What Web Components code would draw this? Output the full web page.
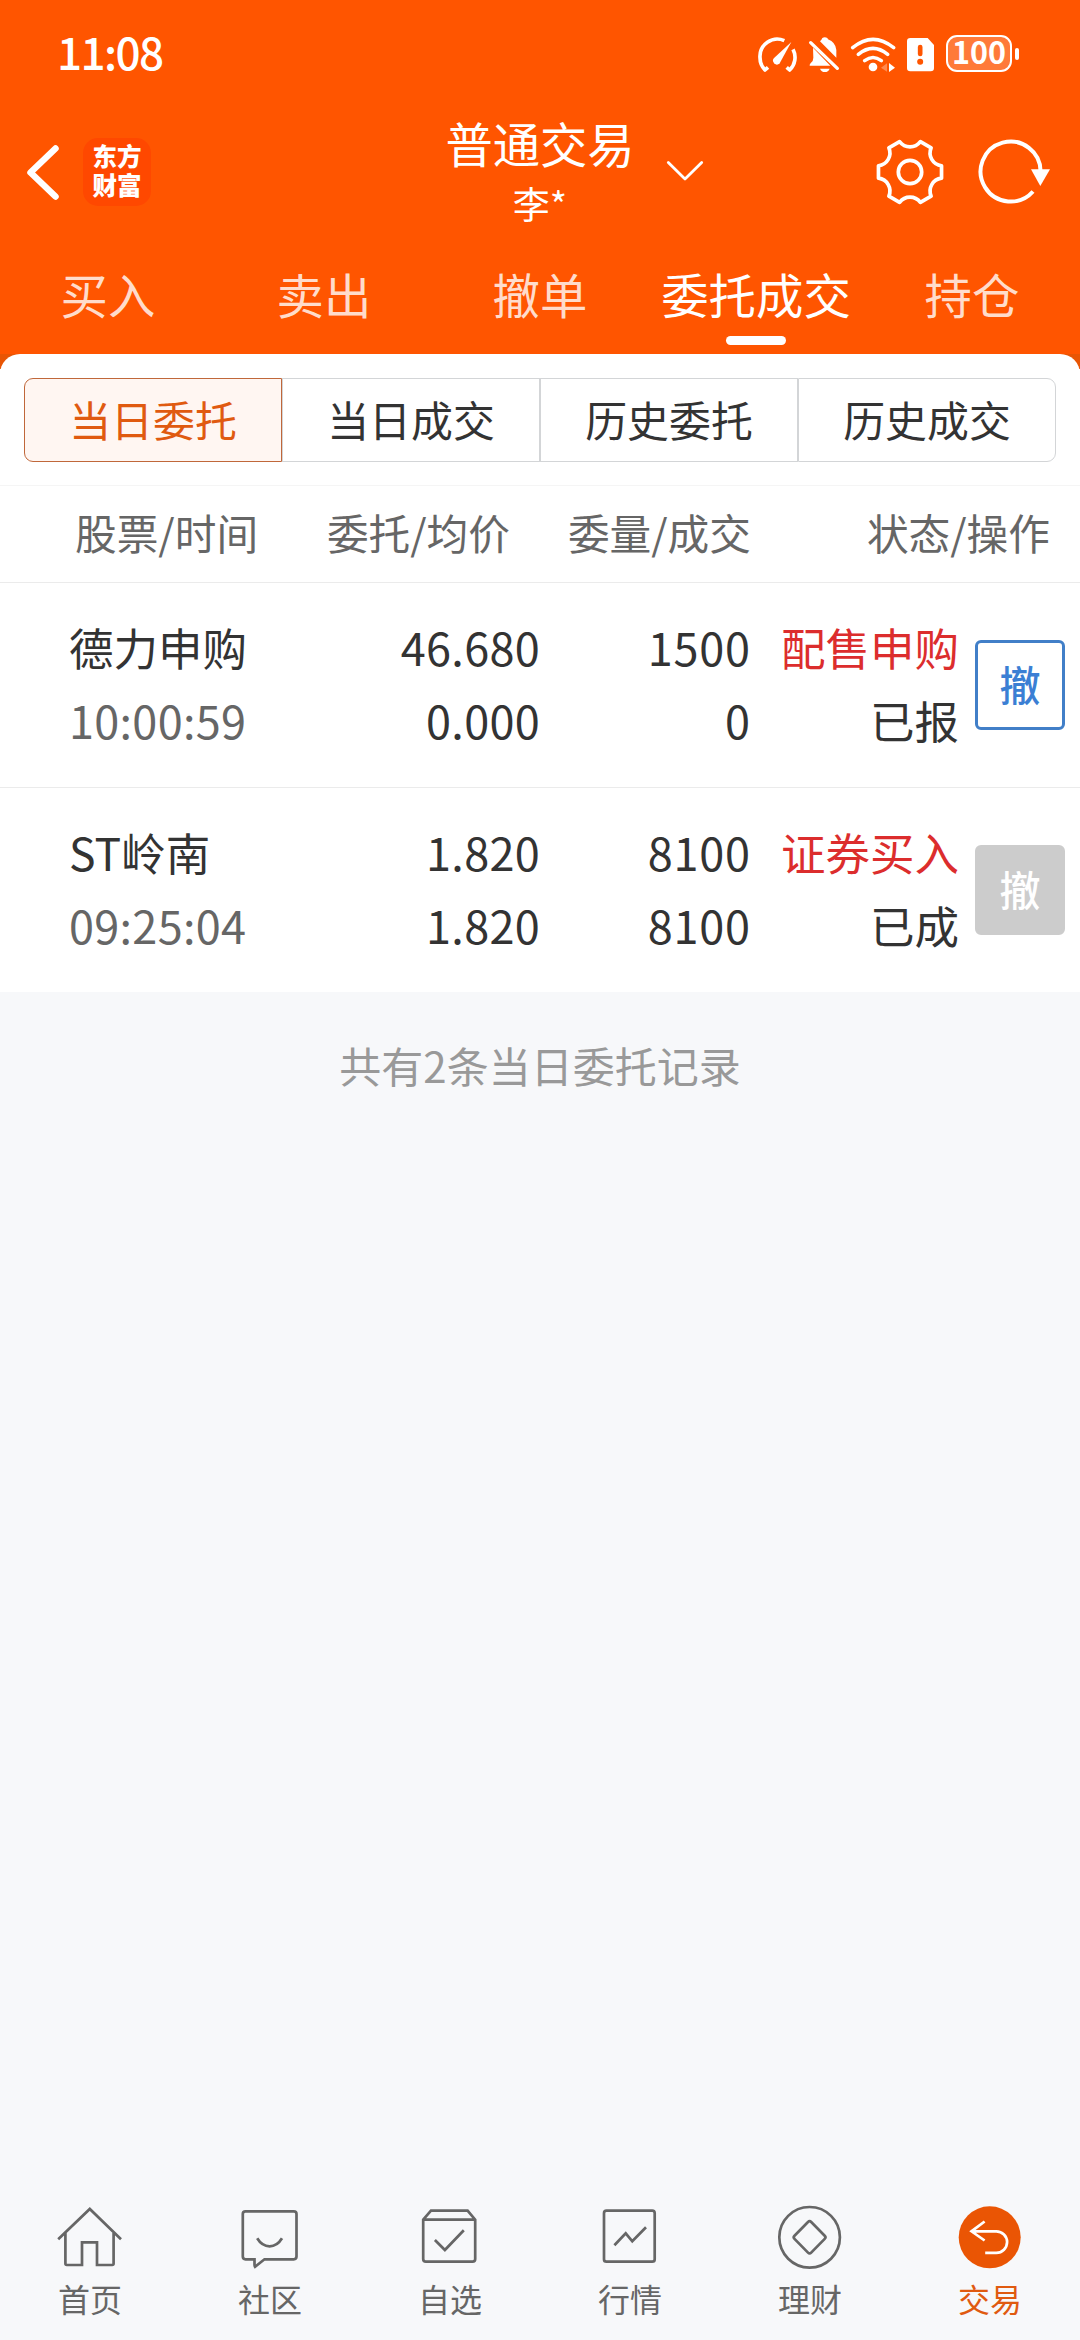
<!DOCTYPE html>
<html lang="zh-CN">
<head>
<meta charset="utf-8">
<title>普通交易</title>
<style>
html,body{margin:0;padding:0;background:#f7f8fa}
body{font-family:"Noto Sans CJK SC",sans-serif;color:#333;width:1080px;height:2340px;overflow:hidden}
</style>
</head>
<body>
<trade-app></trade-app>
<script>
const define = (name, html) => customElements.define(name, class extends HTMLElement {
  constructor() {
    super();
    this.attachShadow({ mode: 'open' });
  }
  connectedCallback() {
    const t = document.createElement('template');
    t.innerHTML = typeof html === 'function' ? html(this) : html;
    this.shadowRoot.replaceChildren(t.content.cloneNode(true));
  }
});

/* Six-lobed gear outline: one valley, repeated every 60 degrees. */
const gearPath = () => {
  const pts = [[-10.4, -30.4], [-5, -23.4], [5, -23.4], [10.4, -30.4]];
  let d = '';
  for (let i = 0; i < 6; i++) {
    const a = i * Math.PI / 3, c = Math.cos(a), s = Math.sin(a);
    const p = pts.map(([x, y]) => (x * c - y * s).toFixed(2) + ' ' + (x * s + y * c).toFixed(2));
    d += (i ? 'L' : 'M') + p[0] + 'C' + p.slice(1).join(' ');
  }
  return d + 'Z';
};

define('status-bar', `
<style>
:host{display:flex;height:112px;box-sizing:border-box;padding:0 61px 0 57px;color:#fff;justify-content:space-between}
.time{font-size:44px;font-weight:500;line-height:103px;height:103px;letter-spacing:-1.6px}
.icons{display:flex;height:107px;align-items:center}
svg{display:block;flex:none}
.bat{display:flex;align-items:center;gap:3px;margin-left:10px}
.cell{box-sizing:border-box;width:66px;height:37px;border:2.5px solid #fff;border-radius:11px;background:#ff7a39;font-size:30.500px;font-weight:700;line-height:29px;text-align:center}
.cap{width:4px;height:12px;border-radius:2px;background:#fff}
</style>
<div class="time">11:08</div>
<div class="icons">
<svg width="180" height="38" viewBox="45 42 540 114" fill="none" stroke="#fff" stroke-linecap="round">
  <path d="M81 139L72 147A52 52 0 0 1 57 110A52 52 0 0 1 130 59M156 85A52 52 0 0 1 146 147L137 139" stroke-width="11" stroke-linejoin="round" stroke-linecap="butt"/>
  <path d="M151 63L116 127A11 11 0 1 1 100 110Z" fill="#fff" stroke="none"/>
  <path d="M216 80L268 134H206Q205 129 210 125Q217 120 217 110ZM237 61Q242 57 244 51Q251 46 259 51L261 55Q284 64 286 87V110Z" fill="#fff" stroke="none"/>
  <path d="M209 65L289 142" stroke-width="10"/>
  <path d="M237 143H266Q262 153 251.500 153Q241 153 237 143Z" fill="#fff" stroke="none"/>
  <path d="M335 80Q396 30 458 80M352 100Q396 64 440 100M371 119Q396 100 421 119" stroke-width="10.500"/>
  <circle cx="396" cy="138" r="13" fill="#fff" stroke="none"/>
  <path d="M420 140L438 127V152Z" fill="#ff8a50" stroke="none"/>
  <path d="M444 126L462 140L444 153Z" fill="#fff" stroke="none"/>
  <path d="M508 51H560L579 72V141Q579 151 569 151H508Q498 151 498 141V61Q498 51 508 51Z" fill="#fff" stroke="none"/>
  <path d="M537.500 78V99" stroke="#f50" stroke-width="14"/>
  <circle cx="537.500" cy="122" r="9" fill="#f50" stroke="none"/>
</svg>
<div class="bat"><div class="cell">100</div><div class="cap"></div></div>
</div>`);

define('brand-logo', `
<style>
:host{display:flex;box-sizing:border-box;width:68px;height:68px;border-radius:15px;background:#ff4800;color:#fff;font-family:"Liberation Sans","Noto Sans CJK SC",sans-serif;font-size:24.500px;font-weight:900;padding-top:4.500px;flex-direction:column;align-items:center}
span{display:block;height:29px;line-height:29px}
</style>
<span>东方</span><span>财富</span>`);

define('nav-header', `
<style>
:host{display:grid;grid-template-columns:1fr auto 1fr;height:120px;color:#fff;align-items:center}
.left,.right{display:flex;align-items:center;height:120px}
.left{padding-left:24px}
svg{display:block;flex:none}
brand-logo{margin-left:21px}
.mid{display:flex;flex-direction:column;align-items:center;height:120px}
.t{font-size:47.300px;line-height:62px}
.s{font-size:37px;line-height:58px}
.down{margin-left:30px}
.gear{margin-left:auto}
.ref{margin:0 27px 0 31px}
</style>
<div class="left">
<svg width="38" height="62" viewBox="24 141 38 62" fill="none" stroke="#fff" stroke-width="6.500" stroke-linecap="round" stroke-linejoin="round"><path d="M55.500 148.500L30.500 172.500L55.500 196.500"/></svg>
<brand-logo></brand-logo>
</div>
<div class="mid"><div class="t"><slot name="title"></slot></div><div class="s"><slot name="account"></slot></div></div>
<div class="right">
<svg class="down" width="40" height="24" viewBox="664 160 40 24" fill="none" stroke="#fff" stroke-width="2.800" stroke-linecap="round" stroke-linejoin="round"><path d="M667.300 162.500L684 179L700.700 162.500"/></svg>
<svg class="gear" width="68" height="68" viewBox="-34 -34 68 68" fill="none" stroke="#fff" stroke-width="3.700" stroke-linejoin="round"><path d="${gearPath()}"/><circle r="11.700"/></svg>
<svg class="ref" width="78" height="68" viewBox="975 138 78 68" fill="none" stroke="#fff" stroke-width="4"><path d="M1040.600 172A30 30 0 1 0 1033 191.500"/><path d="M1031 169.300H1050L1040.300 186Z" fill="#fff" stroke="none"/></svg>
</div>`);

define('top-tab', `
<style>
:host{display:flex;flex:1 1 0;flex-direction:column;align-items:center;height:122px;box-sizing:border-box;padding-top:32px;color:#ffdccb;font-size:47.400px;line-height:60px;white-space:nowrap}
:host([active]){color:#fff}
i{display:none;width:60px;height:9px;border-radius:4.500px;background:#fff;margin-top:12px}
:host([active]) i{display:block}
</style><slot></slot><i></i>`);

define('top-tabs', `<style>:host{display:flex;height:122px}</style><slot></slot>`);

define('segment-item', `
<style>
:host{display:block;flex:1 1 0;box-sizing:border-box;height:84px;border:1px solid #d3d5d7;font-size:41.900px;line-height:79px;text-align:center;color:#333}
:host(:first-child){border-radius:9px 0 0 9px}
:host(:last-child){border-radius:0 9px 9px 0}
:host([active]){border-color:#c0673a;background:#fff6f2;color:#e05a10}
</style><slot></slot>`);

define('segment-bar', `<style>:host{display:flex;padding:24px 24px 23px;border-bottom:1px solid #f5f5f5}</style><slot></slot>`);

define('table-head', `
<style>
:host{display:grid;grid-template-columns:270px 240px 241px 299px;height:96px;border-bottom:1px solid #ebebeb;color:#666;font-size:41.700px;line-height:93px;text-align:right;white-space:nowrap}
::slotted(:first-child){text-align:left;padding-left:75px}
</style><slot></slot>`);

define('cancel-button', `
<style>
:host{display:block;box-sizing:border-box;width:90px;height:90px;border:3px solid #417fc8;border-radius:6px;color:#3b7fd4;font-size:41px;font-weight:500;line-height:80px;text-align:center}
:host([disabled]){background:#ccc;border-color:#ccc;color:#fff}
</style><slot></slot>`);

define('order-row', el => {
  const g = n => el.getAttribute(n);
  return `
<style>
:host{display:grid;grid-template-columns:300px 240px 210px 209px 106px;height:204px;align-items:center;border-bottom:1px solid #ebebeb;font-size:44.500px;white-space:nowrap}
:host([last]){border-bottom:0}
.c{display:flex;flex-direction:column;align-items:flex-end;height:150px;line-height:73px}
.c.name{align-items:flex-start;padding-left:69px}
.n{font-size:45px;letter-spacing:.8px;margin-right:-.8px}
.p{font-size:45px;letter-spacing:.3px}
.time{color:#666}
.side{color:#dc2d2d}
cancel-button{margin-left:16px}
</style>
<div class="c name"><span>${g('name')}</span><span class="p time">${g('time')}</span></div>
<div class="c"><span class="p">${g('price')}</span><span class="p">${g('avg')}</span></div>
<div class="c"><span class="n">${g('qty')}</span><span class="n">${g('filled')}</span></div>
<div class="c"><span class="side">${g('side')}</span><span>${g('state')}</span></div>
<cancel-button ${el.hasAttribute('done') ? 'disabled' : ''}>撤</cancel-button>`;
});

const navIcons = {
  home: `<path d="M3.200 37.300L34.800 7L66 37.300M10.400 31V61.600Q10.400 63 11.800 63H27V40.300H42V63H57.200Q58.600 63 58.600 61.600V31"/>`,
  chat: `<path d="M19.500 57.300H10.500Q7.800 57.300 7.800 54.600V12Q7.800 9.300 10.500 9.300H58.800Q61.500 9.300 61.500 12V54.600Q61.500 57.300 58.800 57.300H29.500L20 64.700Q19.500 64 19.500 62.500ZM22.200 36.300Q27 44.300 34.600 44.300Q42.200 44.300 47 36.300"/>`,
  box: `<path d="M8.200 17.700L16 8.700H52.600L60.200 17.700V57Q60.200 59.700 57.500 59.700H10.900Q8.200 59.700 8.200 57ZM8.200 17.700H60.200M19.900 38L29.900 48L48.800 28.300"/>`,
  chart: `<rect x="9" y="8.700" width="50.700" height="51" rx="2.500"/><path d="M19.400 43.300L30.700 31.300L37.300 39.300L51 25.300"/>`,
  wealth: `<circle cx="34.600" cy="35.300" r="30.300"/><path d="M33 20Q34.600 18.400 36.200 20L49.700 33.700Q51.300 35.300 49.700 36.900L36.200 50.600Q34.600 52.200 33 50.600L19.500 36.900Q17.900 35.300 19.500 33.700Z"/>`,
  trade: `<circle cx="34.700" cy="35.300" r="31" fill="#ea5504" stroke="none"/><path stroke="#fff" d="M29.600 19.500L16.500 29.300L29.600 38.500M16.500 29.300H41.300A10.800 10.800 0 0 1 41.300 50.900H30.200"/>`
};

define('nav-item', el => `
<style>
:host{display:flex;flex:1 1 0;flex-direction:column;align-items:center;color:#666;font-size:32px;line-height:46px}
:host([active]){color:#e05a10}
svg{display:block}
span{margin-top:3px}
</style>
<svg width="70" height="70" viewBox="0 0 70 70" fill="none" stroke="#666" stroke-width="2.700">${navIcons[el.getAttribute('icon')]}</svg>
<span><slot></slot></span>`);

define('bottom-nav', `<style>:host{display:flex;height:138px;flex:none}</style><slot></slot>`);

define('trade-app', `
<style>
:host{display:flex;flex-direction:column;width:1080px;height:2340px;background:#f7f8fa}
header{background:#f50;flex:none}
.wrap{flex:none;background:linear-gradient(#e85504 15px,#fff 15px)}
.panel{background:#fff;border-radius:20px 20px 0 0;height:638px}
.foot{flex:1;text-align:center;color:#999;font-size:42px;line-height:60px;padding-top:43px}
</style>
<header>
<status-bar></status-bar>
<nav-header><span slot="title">普通交易</span><span slot="account">李*</span></nav-header>
<top-tabs><top-tab>买入</top-tab><top-tab>卖出</top-tab><top-tab>撤单</top-tab><top-tab active>委托成交</top-tab><top-tab>持仓</top-tab></top-tabs>
</header>
<div class="wrap"><div class="panel">
<segment-bar><segment-item active>当日委托</segment-item><segment-item>当日成交</segment-item><segment-item>历史委托</segment-item><segment-item>历史成交</segment-item></segment-bar>
<table-head><span>股票/时间</span><span>委托/均价</span><span>委量/成交</span><span>状态/操作</span></table-head>
<order-row name="德力申购" time="10:00:59" price="46.680" avg="0.000" qty="1500" filled="0" side="配售申购" state="已报"></order-row>
<order-row name="ST岭南" time="09:25:04" price="1.820" avg="1.820" qty="8100" filled="8100" side="证券买入" state="已成" done last></order-row>
</div></div>
<div class="foot">共有2条当日委托记录</div>
<bottom-nav><nav-item icon="home">首页</nav-item><nav-item icon="chat">社区</nav-item><nav-item icon="box">自选</nav-item><nav-item icon="chart">行情</nav-item><nav-item icon="wealth">理财</nav-item><nav-item icon="trade" active>交易</nav-item></bottom-nav>`);
</script>
</body>
</html>
